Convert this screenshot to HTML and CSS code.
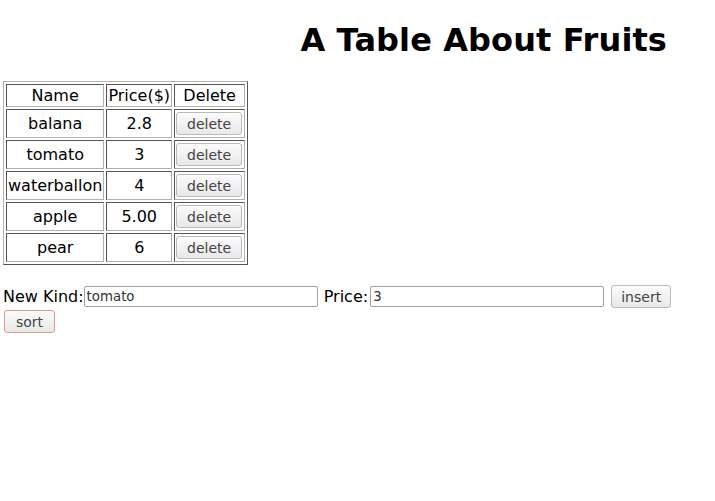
FILE: index.html
```html
<!DOCTYPE html>
<html>
<head>
<meta charset="utf-8">
<link rel="stylesheet" href="styles.css">
</head>
<body>
<h1 class="title">A Table About Fruits</h1>
<table class="fruits">
  <tr><th>Name</th><th>Price($)</th><th>Delete</th></tr>
  <tr><td>balana</td><td>2.8</td><td><button class="btn del">delete</button></td></tr>
  <tr><td>tomato</td><td>3</td><td><button class="btn del">delete</button></td></tr>
  <tr><td>waterballon</td><td>4</td><td><button class="btn del">delete</button></td></tr>
  <tr><td>apple</td><td>5.00</td><td><button class="btn del">delete</button></td></tr>
  <tr><td>pear</td><td>6</td><td><button class="btn del">delete</button></td></tr>
</table>
<div class="form">
  <label class="lbl">New Kind:</label><input class="field" type="text" value="tomato">
  <label class="lbl price-lbl">Price:</label><input class="field price-field" type="text" value="3">
  <button class="btn insert">insert</button>
  <br>
  <button class="btn sort">sort</button>
</div>
</body>
</html>
```
FILE: styles.css
```css
html { background: #fff; }
body {
  margin: 0 3px;
  font-family: "DejaVu Sans", sans-serif;
  font-size: 16px;
  color: #000;
}
.title {
  font-size: 32px;
  font-weight: bold;
  text-align: right;
  padding-right: 45px;
  margin: 22px 0 22px;
  line-height: 37px;
  letter-spacing: 0.1px;
}
.fruits {
  border-collapse: separate;
  border-spacing: 2px;
  border: 1px solid;
  border-color: #b0b0b0 #555 #555 #b0b0b0;
}
.fruits th, .fruits td {
  border: 1px solid;
  border-color: #555 #b0b0b0 #b0b0b0 #555;
  padding: 1px;
  text-align: center;
  font-weight: normal;
}
.fruits th:first-child, .fruits td:first-child { min-width: 94px; }
.btn {
  font-family: "DejaVu Sans", sans-serif;
  font-size: 14px;
  color: #444;
  background: linear-gradient(#fbfbfb, #e8e8e8);
  border: 1px solid #bababa;
  border-radius: 3px;
  padding: 0 9px;
  height: 23px;
  margin: 1px 0;
  vertical-align: middle;
}
.del { padding: 0 10px; margin: 1px 1px 1px 0; }
.form { margin-top: 19px; line-height: 24px; }
.lbl { font-size: 16px; vertical-align: middle; }
.price-lbl { margin-left: 1px; }
.field {
  font-family: "DejaVu Sans", sans-serif;
  font-size: 13.33px;
  width: 234px;
  box-sizing: border-box;
  height: 21px;
  border: 1px solid #a0a0a0;
  border-radius: 2px;
  padding: 1px 2px;
  margin: 0;
  color: #333;
  vertical-align: middle;
}
.price-field { margin-left: 2px; }
.insert { margin-left: 2px; }
.sort { border-color: #e29a88; padding: 0 11px; margin-left: 1px; }
```
